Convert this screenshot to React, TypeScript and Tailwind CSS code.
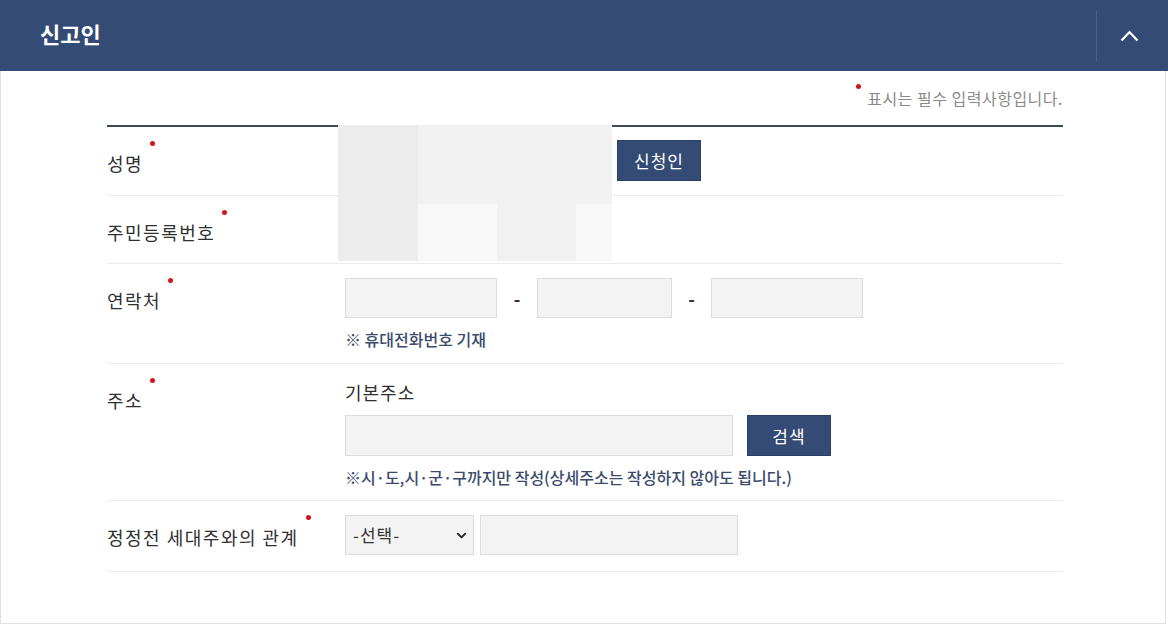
import { ChevronDown } from 'lucide-react'

const font = { fontFamily: '"Noto Sans CJK KR", "Noto Sans", sans-serif' }

const RequiredLabel = ({ text }: { text: string }) => (
  <div className="w-[238px] shrink-0 pt-[24px]">
    <span className="relative inline-block pr-[12px] text-[18px] leading-[24px] tracking-[1.5px] text-[#2f2f2f]">
      {text}
      <span className="absolute right-[0px] -top-[10px] size-[5px] rounded-full bg-[#d3141c]" />
    </span>
  </div>
)

const TextBox = ({ className }: { className: string }) => (
  <input
    type="text"
    className={`h-[40px] border border-[#dcdcdc] bg-[#f3f3f3] px-2 text-[15px] outline-none ${className}`}
  />
)

const NavyButton = ({ children }: { children: string }) => (
  <button className="flex h-[41px] w-[84px] items-center justify-center border border-[#2b3f66] bg-[#344b75] text-[17px] tracking-[1px] text-white">
    {children}
  </button>
)

const Note = ({ children }: { children: string }) => (
  <p className="text-[16px] leading-[20px] font-medium text-[#3b4b6c]">{children}</p>
)

// pixelated blur covering the applicant's name / id number
const redact = [
  ['#ececec', '#f1f1f1', '#f1f1f1', '#f1f1f1'],
  ['#ececec', '#f8f8f8', '#f1f1f1', '#f8f8f8'],
]

const App = () => {
  return (
    <div className="min-h-[624px] w-full bg-white" style={font}>
      <div className="flex h-[71px] items-center justify-between bg-[#344b75]">
        <h2 className="pb-[4px] pl-[40px] text-[22px] font-bold text-white">신고인</h2>
        <div className="flex h-full items-center">
          <div className="h-[52px] w-px bg-[#4b5f86]" />
          <button className="flex w-[71px] items-center justify-center pr-[7px] pb-[1px] text-white">
            <svg width="19" height="13" viewBox="0 0 19 13" fill="none">
              <polyline points="1.5,11.5 9.5,3 17.5,11.5" stroke="currentColor" strokeWidth="2.2" />
            </svg>
          </button>
        </div>
      </div>

      <div className="w-[1166px] border-x border-b border-[#e1e1e1] pr-[102px] pb-[51px] pl-[106px]">
        <p className="flex justify-end pt-[16px] pb-[16px] text-[16px] leading-[22px] tracking-[0.5px] text-[#8a8a8a]">
          <span className="relative -top-[11px] mr-[6px] mt-[8px] size-[5px] rounded-full bg-[#d3141c]" />
          표시는 필수 입력사항입니다.
        </p>

        <div className="relative border-t-2 border-[#3e4a5c]">
          <div className="absolute -top-[2px] left-[231px] z-10 grid grid-cols-[80px_79px_79px_36px] grid-rows-[79px_57px]">
            {redact.flat().map((c, i) => (
              <div key={i} style={{ backgroundColor: c }} />
            ))}
          </div>

          <div className="flex border-b border-[#ebebeb]">
            <RequiredLabel text="성명" />
            <div className="flex items-center gap-[7px] pt-[13px] pb-[14px]">
              <div className="h-[41px] w-[265px]" />
              <NavyButton>신청인</NavyButton>
            </div>
          </div>

          <div className="flex h-[68px] border-b border-[#ebebeb]">
            <RequiredLabel text="주민등록번호" />
          </div>

          <div className="flex border-b border-[#ebebeb]">
            <RequiredLabel text="연락처" />
            <div className="flex flex-col gap-[11px] pt-[14px] pb-[14px]">
              <div className="flex items-center">
                <TextBox className="w-[152px]" />
                <span className="w-[40px] text-center text-[18px] font-bold text-[#333]">-</span>
                <TextBox className="w-[135px]" />
                <span className="w-[39px] text-center text-[18px] font-bold text-[#333]">-</span>
                <TextBox className="w-[152px]" />
              </div>
              <Note>※ 휴대전화번호 기재</Note>
            </div>
          </div>

          <div className="flex border-b border-[#ebebeb]">
            <RequiredLabel text="주소" />
            <div className="flex flex-col pt-[16px] pb-[13px]">
              <p className="text-[18px] leading-[24px] tracking-[1px] text-[#2f2f2f]">기본주소</p>
              <div className="mt-[11px] flex items-center gap-[14px]">
                <TextBox className="h-[41px] w-[388px]" />
                <NavyButton>검색</NavyButton>
              </div>
              <div className="mt-[11px]">
                <Note>※시·도,시·군·구까지만 작성(상세주소는 작성하지 않아도 됩니다.)</Note>
              </div>
            </div>
          </div>

          <div className="flex border-b border-[#ebebeb]">
            <RequiredLabel text="정정전 세대주와의 관계" />
            <div className="flex items-center gap-[6px] pt-[14px] pb-[16px]">
              <div className="relative">
                <select className="h-[40px] w-[129px] appearance-none border border-[#dcdcdc] bg-[#f3f3f3] pl-[7px] text-[17px] tracking-[1px] text-[#333] outline-none">
                  <option>-선택-</option>
                </select>
                <ChevronDown
                  className="pointer-events-none absolute top-[13px] right-[5px] size-[15px] text-[#222]"
                  strokeWidth={3}
                />
              </div>
              <TextBox className="w-[258px]" />
            </div>
          </div>
        </div>
      </div>
    </div>
  )
}

export default App
